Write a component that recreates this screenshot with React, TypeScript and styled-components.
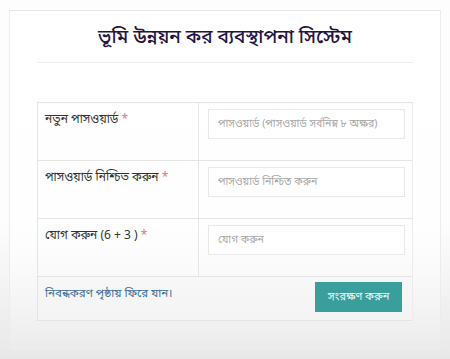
import React from "react";
import styled, { createGlobalStyle } from "styled-components";

const GlobalStyle = createGlobalStyle`
  html, body {
    margin: 0;
    padding: 0;
    height: 100%;
  }
  body {
    background: linear-gradient(to bottom, #fdfdfd 0%, #fdfdfd 62%, #e8e8e8 100%);
    font-family: "Noto Sans Bengali", "Noto Sans", "DejaVu Sans", sans-serif;
    color: #333;
  }
`;

type Field = {
  label: string;
  placeholder: string;
};

const fields: Field[] = [
  { label: "নতুন পাসওয়ার্ড", placeholder: "পাসওয়ার্ড (পাসওয়ার্ড সর্বনিম্ন ৮ অক্ষর)" },
  { label: "পাসওয়ার্ড নিশ্চিত করুন", placeholder: "পাসওয়ার্ড নিশ্চিত করুন" },
  { label: "যোগ করুন (6 + 3 )", placeholder: "যোগ করুন" },
];

function App() {
  return (
    <>
      <GlobalStyle />
      <Page>
        <Panel>
          <Title>ভূমি উন্নয়ন কর ব্যবস্থাপনা সিস্টেম</Title>
          <Divider />
          <FormTable>
            {fields.map(f => (
              <Row key={f.label}>
                <LabelCell>
                  {f.label} <Required>*</Required>
                </LabelCell>
                <InputCell>
                  <Input placeholder={f.placeholder} />
                </InputCell>
              </Row>
            ))}
            <Footer>
              <BackLink href="#">নিবন্ধকরণ পৃষ্ঠায় ফিরে যান।</BackLink>
              <SaveButton>সংরক্ষণ করুন</SaveButton>
            </Footer>
          </FormTable>
        </Panel>
      </Page>
    </>
  );
}

export default App;

const Page = styled.div`
  width: 450px;
  height: 359px;
  padding: 10px 9px 0 9px;
  box-sizing: border-box;
`;

const Panel = styled.div`
  height: 340px;
  box-sizing: border-box;
  border: 1px solid #ececec;
  border-top-color: #e6e6e6;
  padding: 15px 27px 0 27px;
  background: linear-gradient(to bottom, rgba(255,255,255,0.9) 0%, rgba(255,255,255,0.6) 70%, rgba(240,240,240,0.3) 100%);
`;

const Title = styled.h1`
  margin: 0;
  text-align: center;
  font-size: 19px;
  font-weight: 500;
  line-height: 26px;
  color: #25143f;
`;

const Divider = styled.div`
  margin: 10px 0 0 0;
  height: 1px;
  background: #eeeeee;
`;

const FormTable = styled.div`
  margin-top: 39px;
  border: 1px solid #e4e4e4;
  border-right-color: #ececec;
`;

const Row = styled.div`
  display: grid;
  grid-template-columns: 161px 1fr;
  height: 58px;
  box-sizing: border-box;
  border-bottom: 1px solid #e4e4e4;
`;

const LabelCell = styled.div`
  padding: 8px 7px 0 7px;
  font-size: 12px;
  line-height: 18px;
  color: #333;
  border-right: 1px solid #e6e6e6;
`;

const Required = styled.span`
  color: #e07a80;
`;

const InputCell = styled.div`
  padding: 6px 7px 0 9px;
`;

const Input = styled.input`
  width: 100%;
  height: 30px;
  box-sizing: border-box;
  border: 1px solid #e8e8e8;
  padding: 0 9px;
  font-family: inherit;
  font-size: 10.5px;
  color: #555;
  background: #fff;
  outline: none;
  &::placeholder {
    color: #a8a8a8;
  }
`;

const Footer = styled.div`
  display: flex;
  justify-content: space-between;
  align-items: flex-start;
  height: 43px;
  padding: 5px 10px 0 7px;
  box-sizing: border-box;
  background: rgba(245, 245, 245, 0.5);
`;

const BackLink = styled.a`
  font-size: 11.5px;
  color: #3d6f9c;
  text-decoration: none;
  line-height: 18px;
  margin-top: 3px;
`;

const SaveButton = styled.button`
  width: 87px;
  height: 30px;
  border: none;
  background: #3a9e9c;
  color: #eef8f8;
  font-family: inherit;
  font-size: 11px;
  cursor: pointer;
`;
